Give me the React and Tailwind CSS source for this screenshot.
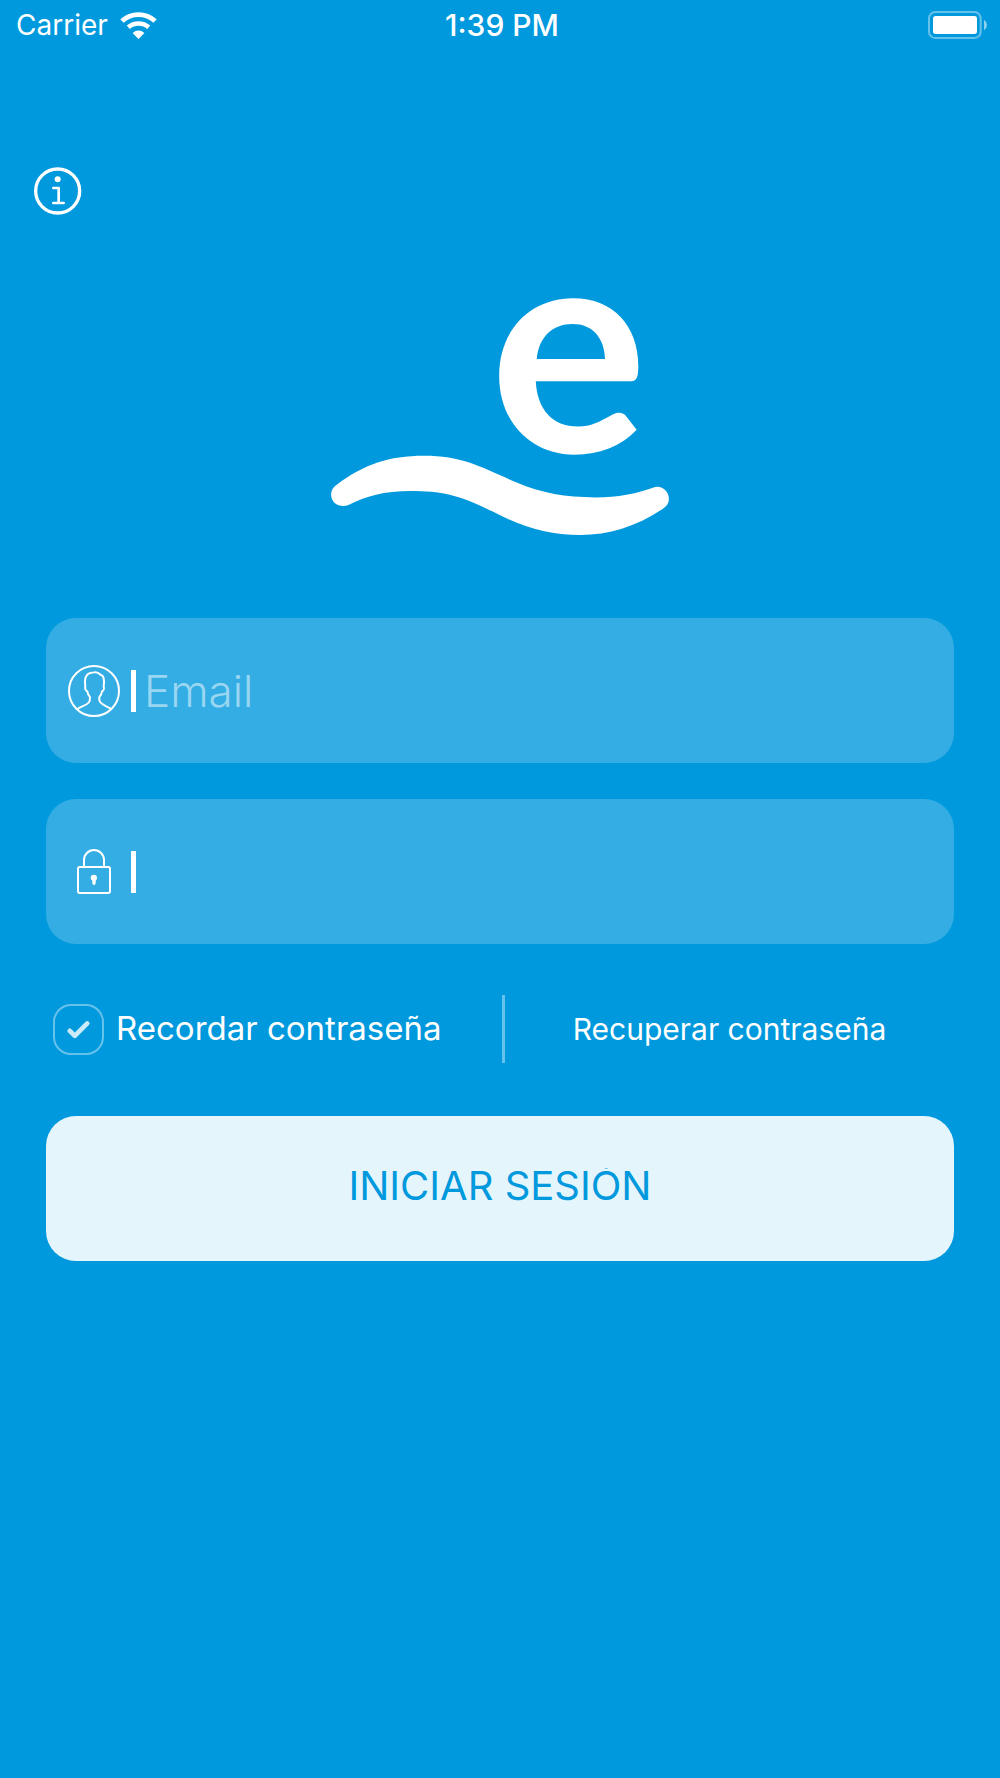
import React, { useState } from 'react';

const WifiIcon = () => (
    <svg viewBox="360 28 112 84" className="w-[37px] h-[28px]" fill="none" stroke="#fff" aria-hidden="true">
        <path d="M366 58A74 74 0 0 1 466 58" strokeWidth="15" />
        <path d="M385 77A47 47 0 0 1 447 77" strokeWidth="14" />
        <path d="M398 94Q416 79 434 94L416 112Z" fill="#fff" stroke="none" />
    </svg>
);

const BatteryIcon = () => (
    <svg viewBox="84 30 180 84" className="w-[60px] h-[28px]" aria-hidden="true">
        <rect x="87" y="33" width="155" height="78" rx="19" fill="none" stroke="#66c2eb" strokeWidth="6" />
        <rect x="99" y="45" width="132" height="54" rx="8" fill="#fff" />
        <path d="M252 56Q261 62 261 72T252 88Z" fill="#8cd0f0" />
    </svg>
);

const InfoIcon = () => (
    <svg viewBox="41 50 144 144" className="size-12" fill="none" stroke="#fff" aria-hidden="true">
        <circle cx="112" cy="122" r="66" strokeWidth="10" />
        <circle cx="112" cy="87" r="9" fill="#fff" stroke="none" />
        <path d="M99 113H115V158M99 158H130" strokeWidth="8" strokeLinecap="round" strokeLinejoin="round" />
    </svg>
);

const Logo = () => (
    <svg viewBox="66 54 1015 712" className="w-[338px] h-[237px]" fill="#fff" role="img" aria-label="Logo">
        <path
            fillRule="evenodd"
            d="M984 450C938 498 875 525 797 525C665 525 571 425 571 288C571 150 665 55 793 55C915 55 989 140 989 258C989 288 985 304 968 304H681C685 388 730 440 808 440C848 440 870 427 912 404C930 395 945 399 953 410ZM684 237H889C887 172 850 132 792 132C730 132 690 172 684 237Z"
        />
        <path d="M84 614C165 554 240 528 345 528C460 528 520 563 620 607C700 641 770 653 860 653C930 653 980 642 1035 623C1060 615 1081 635 1081 658C1081 670 1075 680 1062 688C980 742 900 766 815 766C720 766 640 742 550 695C450 646 400 634 305 634C225 634 170 650 120 675C95 686 66 672 66 644C66 632 72 622 84 614Z" />
    </svg>
);

const UserIcon = () => (
    <svg viewBox="0 0 156 156" className="size-[52px]" fill="none" stroke="#fff" strokeWidth="6" aria-hidden="true">
        <circle cx="78" cy="78" r="75" />
        <path
            strokeWidth="6"
            strokeLinejoin="round"
            d="M28 132C42 122 60 121 65 108L66 96C61 92 59 86 58 79C53 77 50 70 52 65C48 36 55 24 78 22C87 21 93 24 97 29C107 30 110 44 107 65C109 70 107 77 102 79C101 86 98 92 94 96L94 106C98 121 116 122 130 132"
        />
    </svg>
);

const LockIcon = () => (
    <svg viewBox="138 204 102 135" className="w-[34px] h-[45px]" fill="none" stroke="#fff" aria-hidden="true">
        <rect x="141" y="258" width="96" height="78" rx="5" strokeWidth="6" />
        <path d="M159 256V237A30 30 0 0 1 219 237V256" strokeWidth="6" />
        <path d="M184 299Q179 296 179 291A9 9 0 0 1 198 291Q198 296 194 299V307Q194 312 189 312T184 307Z" fill="#fff" stroke="none" />
    </svg>
);

const Field = ({ id, label, icon, ...props }) => (
    <div className="flex h-[145px] items-center rounded-[30px] bg-[#33ade3] pl-[22px] pr-6">
        <label htmlFor={id} className="flex w-[52px] shrink-0 justify-center">
            {icon}
        </label>
        <span className="ml-[11px] h-[42px] w-[5px] shrink-0 bg-white" />
        <input
            id={id}
            aria-label={label}
            className="ml-2 h-14 min-w-0 flex-1 bg-transparent text-[44px] font-light text-white outline-none placeholder:text-[#99d6f1]"
            {...props}
        />
    </div>
);

const App = () => {
    const [email, setEmail] = useState('');
    const [password, setPassword] = useState('');
    const [remember, setRemember] = useState(true);

    return (
        <div className="min-h-screen bg-[#0099dd] text-white font-[Inter,sans-serif]">
            {/* Status bar */}
            <header className="grid h-[50px] grid-cols-3 items-center pl-4 pr-3 text-[28px]">
                <div className="flex items-center gap-3">
                    <span>Carrier</span>
                    <WifiIcon />
                </div>
                <span className="text-center text-[30px] font-medium">1:39 PM</span>
                <div className="flex justify-end">
                    <BatteryIcon />
                </div>
            </header>

            <button type="button" aria-label="Información" className="mt-[117px] ml-[34px] block">
                <InfoIcon />
            </button>

            <div className="mt-[83px] flex justify-center">
                <Logo />
            </div>

            <form className="mt-[83px] px-[46px]" onSubmit={(e) => e.preventDefault()}>
                <div className="flex flex-col gap-9">
                    <Field
                        id="email"
                        label="Email"
                        icon={<UserIcon />}
                        type="email"
                        placeholder="Email"
                        value={email}
                        onChange={(e) => setEmail(e.target.value)}
                    />
                    <Field
                        id="password"
                        label="Contraseña"
                        icon={<LockIcon />}
                        type="password"
                        value={password}
                        onChange={(e) => setPassword(e.target.value)}
                    />
                </div>

                <div className="mt-[51px] grid grid-cols-2 gap-1">
                    <label className="flex h-[68px] items-center gap-3 pl-[7px]">
                        <span className="relative flex size-[51px] shrink-0">
                            <input
                                type="checkbox"
                                checked={remember}
                                onChange={(e) => setRemember(e.target.checked)}
                                className="peer size-full appearance-none rounded-[18px] border-2 border-[#66c2eb]"
                            />
                            <svg
                                viewBox="0 0 152 152"
                                className="pointer-events-none absolute inset-0 hidden peer-checked:block"
                                fill="none"
                                stroke="#ccebf8"
                                strokeWidth="14"
                                strokeLinecap="round"
                                strokeLinejoin="round"
                                aria-hidden="true"
                            >
                                <path d="M50 80L65 95L102 58" />
                            </svg>
                        </span>
                        <span className="whitespace-nowrap text-[33px]">Recordar contraseña</span>
                    </label>
                    <a
                        href="#recuperar"
                        className="flex h-[68px] items-center justify-center border-l-3 border-[#66c2eb] text-[30px]"
                    >
                        Recuperar contraseña
                    </a>
                </div>

                <button
                    type="submit"
                    className="mt-[53px] flex h-[145px] w-full items-center justify-center rounded-[30px] bg-[#e5f5fc] pb-1.5 text-[40px] text-[#0099dd]"
                >
                    <span className="overflow-hidden leading-9">INICIAR SESIÓN</span>
                </button>
            </form>
        </div>
    );
};

export default App;
